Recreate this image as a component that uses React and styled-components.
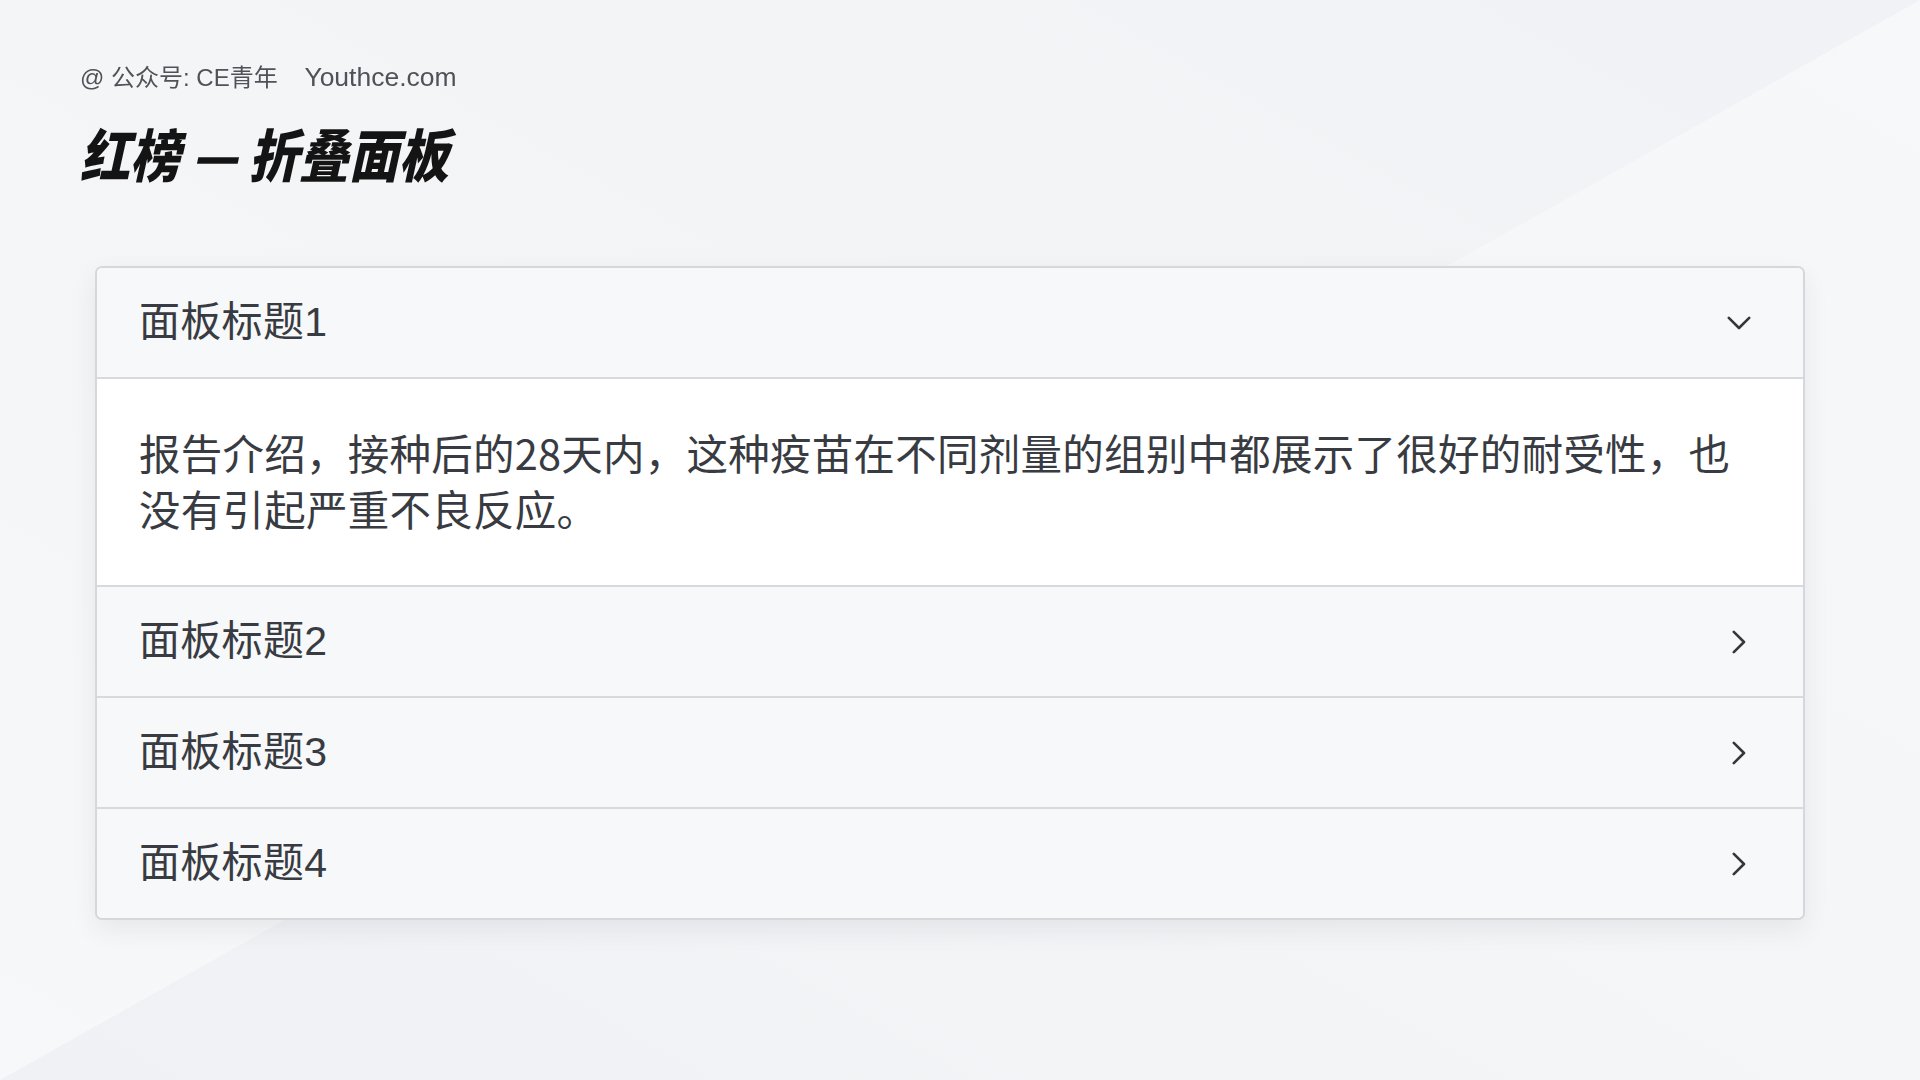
import React, { useState } from "react";
import styled, { createGlobalStyle } from "styled-components";

const GlobalStyle = createGlobalStyle`
  html, body {
    margin: 0;
    padding: 0;
  }
  body {
    font-family: "Liberation Sans", "Noto Sans CJK SC", sans-serif;
    background: linear-gradient(to bottom left, #f1f2f5 0%, #f4f5f7 50%, #f7f8fa 100%);
    min-height: 100vh;
  }
  body::before {
    content: "";
    position: fixed;
    inset: 0;
    z-index: -1;
    clip-path: polygon(100% 0, 100% 100%, 0 100%);
    background: linear-gradient(to bottom left, #f7f8fa 0%, #f5f6f8 45%, #f0f1f4 100%);
    pointer-events: none;
  }
`;

const Page = styled.div`
  min-height: 1080px;
  box-sizing: border-box;
  padding: 61px 0 0 80px;
  display: flex;
  flex-direction: column;
  align-items: flex-start;
`;

const Source = styled.div`
  font-family: "Liberation Sans", "Noto Sans CJK SC", sans-serif;
  font-size: 24px;
  line-height: 32px;
  color: #4f5358;
  white-space: pre;
`;

const Site = styled.span`
  font-size: 26.5px;
`;

const Title = styled.h1`
  margin: 26px 0 0 0;
  font-family: "Noto Sans CJK SC", sans-serif;
  font-weight: 900;
  font-style: italic;
  font-size: 50px;
  line-height: 64px;
  color: #141414;
  transform: scaleY(1.14);
  transform-origin: left center;
  white-space: pre;
`;

const Card = styled.div`
  margin: 82px 0 0 15px;
  width: 1710px;
  box-sizing: border-box;
  border: 2px solid #d6d7da;
  border-radius: 7px;
  background: #f7f8fa;
  overflow: hidden;
  box-shadow: 0 10px 26px rgba(40, 50, 70, 0.08);
`;

const Item = styled.div`
  & + & {
    border-top: 2px solid #d8d9dc;
  }
`;

const Header = styled.button`
  all: unset;
  box-sizing: border-box;
  width: 100%;
  height: 109px;
  display: flex;
  align-items: center;
  justify-content: space-between;
  padding: 0 52px 0 42px;
  background: #f7f8fa;
  cursor: pointer;
  font-family: "Liberation Sans", "Noto Sans CJK SC", sans-serif;
  font-size: 41px;
  color: #383b41;
`;

const HeaderText = styled.span`
  line-height: 1;
  letter-spacing: 0.3px;
`;

const IconBox = styled.span`
  width: 24px;
  height: 24px;
  display: flex;
  align-items: center;
  justify-content: center;
  color: #34373c;
`;

const Content = styled.div`
  border-top: 2px solid #d8d9dc;
  background: #ffffff;
  padding: 45px 42px 49px 42px;
  font-family: "Noto Sans CJK SC", sans-serif;
  font-size: 41.5px;
  letter-spacing: 0.25px;
  line-height: 56px;
  color: #383b41;
`;

const ChevronDown = () => (
  <svg width="24" height="14" viewBox="0 0 24 14" fill="none">
    <polyline
      points="1.8,1.8 12,12 22.2,1.8"
      stroke="currentColor"
      strokeWidth="2.6"
      strokeLinecap="round"
      strokeLinejoin="round"
    />
  </svg>
);

const ChevronRight = () => (
  <svg width="14" height="24" viewBox="0 0 14 24" fill="none">
    <polyline
      points="1.8,1.8 12,12 1.8,22.2"
      stroke="currentColor"
      strokeWidth="2.6"
      strokeLinecap="round"
      strokeLinejoin="round"
    />
  </svg>
);

const panels = [
  {
    title: "面板标题1",
    body: "报告介绍，接种后的28天内，这种疫苗在不同剂量的组别中都展示了很好的耐受性，也没有引起严重不良反应。",
  },
  { title: "面板标题2", body: "面板内容2" },
  { title: "面板标题3", body: "面板内容3" },
  { title: "面板标题4", body: "面板内容4" },
];

export default function App() {
  const [open, setOpen] = useState(0);
  return (
    <>
      <GlobalStyle />
      <Page>
        <Source>
          {"@ 公众号: CE青年    "}
          <Site>Youthce.com</Site>
        </Source>
        <Title>{"红榜 — 折叠面板"}</Title>
        <Card>
          {panels.map((p, i) => (
            <Item key={p.title}>
              <Header onClick={() => setOpen(open === i ? -1 : i)}>
                <HeaderText>{p.title}</HeaderText>
                <IconBox>{open === i ? <ChevronDown /> : <ChevronRight />}</IconBox>
              </Header>
              {open === i && <Content>{p.body}</Content>}
            </Item>
          ))}
        </Card>
      </Page>
    </>
  );
}
